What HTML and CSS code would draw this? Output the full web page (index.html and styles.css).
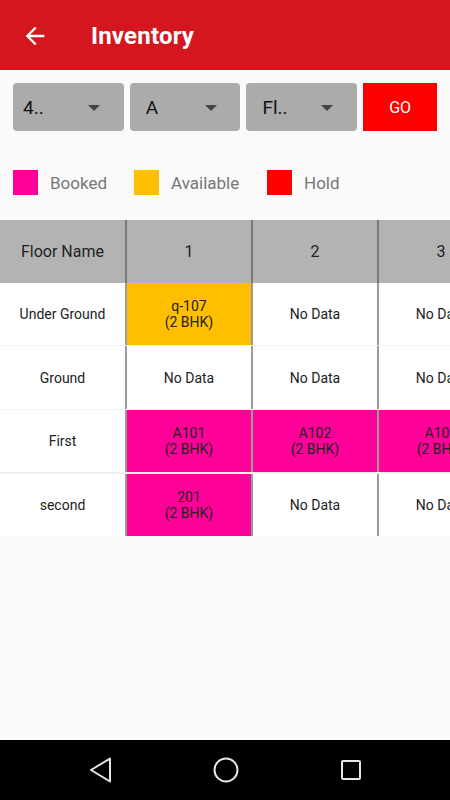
FILE: index.html
```html
<!DOCTYPE html>
<html>
<head>
<meta charset="utf-8">
<link rel="stylesheet" href="styles.css">
</head>
<body>
<div class="app">
  <header class="topbar">
    <svg class="back" width="28" height="28" viewBox="0 0 24 24"><path d="M20 11H7.83l5.59-5.59L12 4l-8 8 8 8 1.41-1.41L7.83 13H20v-2z" fill="#fff"/></svg>
    <h1 class="title">Inventory</h1>
  </header>
  <div class="filters">
    <div class="select first"><span>4..</span><i class="caret"></i></div>
    <div class="select"><span>A</span><i class="caret"></i></div>
    <div class="select"><span>Fl..</span><i class="caret"></i></div>
    <button class="go">GO</button>
  </div>
  <div class="legend">
    <div class="legend-item"><i class="sw booked"></i><span>Booked</span></div>
    <div class="legend-item"><i class="sw avail"></i><span>Available</span></div>
    <div class="legend-item"><i class="sw hold"></i><span>Hold</span></div>
  </div>
  <div class="table">
    <div class="row head">
      <div class="name">Floor Name</div>
      <div class="cell">1</div>
      <div class="cell">2</div>
      <div class="cell">3</div>
    </div>
    <div class="row r1">
      <div class="name">Under Ground</div>
      <div class="cell avail">q-107<br>(2 BHK)</div>
      <div class="cell">No Data</div>
      <div class="cell">No Data</div>
    </div>
    <div class="row r2">
      <div class="name">Ground</div>
      <div class="cell">No Data</div>
      <div class="cell">No Data</div>
      <div class="cell">No Data</div>
    </div>
    <div class="row r3">
      <div class="name">First</div>
      <div class="cell booked">A101<br>(2 BHK)</div>
      <div class="cell booked">A102<br>(2 BHK)</div>
      <div class="cell booked">A103<br>(2 BHK)</div>
    </div>
    <div class="row r4">
      <div class="name">second</div>
      <div class="cell booked">201<br>(2 BHK)</div>
      <div class="cell">No Data</div>
      <div class="cell">No Data</div>
    </div>
  </div>
  <div class="spacer"></div>
  <nav class="navbar">
    <svg width="24" height="26" viewBox="0 0 24 26"><path d="M21 1.5 L2 13 L21 24.5 Z" fill="none" stroke="#e6e6e6" stroke-width="2" stroke-linejoin="round"/></svg>
    <svg width="26" height="26" viewBox="0 0 26 26"><circle cx="13" cy="13" r="11.5" fill="none" stroke="#e6e6e6" stroke-width="2"/></svg>
    <svg width="24" height="24" viewBox="0 0 24 24"><rect x="3" y="3" width="18" height="18" rx="1" fill="none" stroke="#e6e6e6" stroke-width="2"/></svg>
  </nav>
</div>
</body>
</html>
```
FILE: styles.css
```css
* { box-sizing: border-box; }
html, body { margin: 0; padding: 0; }
body {
  width: 450px;
  height: 800px;
  overflow: hidden;
  background: #fafafa;
  font-family: Roboto, "Liberation Sans", sans-serif;
}
.app {
  width: 450px;
  height: 800px;
  display: flex;
  flex-direction: column;
}
.topbar {
  height: 70px;
  background: #d4171f;
  display: flex;
  align-items: center;
  padding-left: 21px;
  padding-top: 2px;
  flex: none;
}
.back { display: block; }
.title {
  margin: 0 0 0 42px;
  color: #fff;
  font-size: 24px;
  font-weight: 700;
  letter-spacing: 0.2px;
}
.filters {
  display: flex;
  padding: 13px 13px 0 13px;
  gap: 6px;
  height: 61px;
  flex: none;
}
.select {
  width: 111px;
  height: 48px;
  background: #ababab;
  border-radius: 4px;
  display: flex;
  align-items: center;
  padding-left: 16px;
  position: relative;
  font-size: 19px;
  color: #111;
}
.select.first { padding-left: 10px; }
.caret {
  position: absolute;
  left: 75px;
  top: 22px;
  width: 0; height: 0;
  border-left: 6px solid transparent;
  border-right: 6px solid transparent;
  border-top: 6px solid #444;
}
.go {
  width: 74px;
  height: 48px;
  border: none;
  border-radius: 0;
  background: #ff0000;
  color: #fff;
  font-family: Roboto, "Liberation Sans", sans-serif;
  font-size: 16px;
  padding: 0;
}
.legend {
  display: flex;
  align-items: center;
  height: 25px;
  margin-top: 39px;
  padding-left: 13px;
  flex: none;
}
.legend-item {
  display: flex;
  align-items: center;
  font-size: 17px;
  color: #777;
}
.legend-item .sw {
  width: 25px;
  height: 25px;
  display: block;
  margin-right: 12px;
}
.legend-item:nth-child(1) { width: 121px; }
.legend-item:nth-child(2) { width: 133px; }
.sw.booked { background: #ff0099; }
.sw.avail { background: #ffbf00; }
.sw.hold { background: #ff0000; }
.table {
  margin-top: 25px;
  flex: none;
  overflow: hidden;
  width: 450px;
}
.row {
  display: flex;
  background: #fff;
  font-size: 14px;
  color: #222;
}
.row.head {
  height: 63px;
  background: #b3b3b3;
  font-size: 16px;
}
.row.r1 { height: 63px; border-bottom: 1px solid #f2f2f2; }
.row.r2 { height: 64px; border-bottom: 1px solid #f2f2f2; }
.row.r3 { height: 64px; border-bottom: 2px solid #f2f2f2; }
.row.r4 { height: 62px; }
.row.head .cell { border-left-color: #7a7a7a; }
.name {
  width: 125px;
  flex: none;
  display: flex;
  align-items: center;
  justify-content: center;
  text-align: center;
}
.cell {
  width: 126px;
  flex: none;
  border-left: 2px solid #9a9a9a;
  display: flex;
  align-items: center;
  justify-content: center;
  text-align: center;
  line-height: 16px;
  white-space: nowrap;
}
.row:not(.head) .cell:first-of-type { border-left-color: #6e6e6e; }
.cell.avail { background: #ffbf00; }
.cell.booked { background: #ff0099; }
.spacer { flex: 1; }
.navbar {
  height: 60px;
  background: #000;
  flex: none;
  display: flex;
  align-items: center;
  justify-content: center;
  gap: 100px;
  padding-left: 1px;
}
.navbar svg { display: block; }
```
